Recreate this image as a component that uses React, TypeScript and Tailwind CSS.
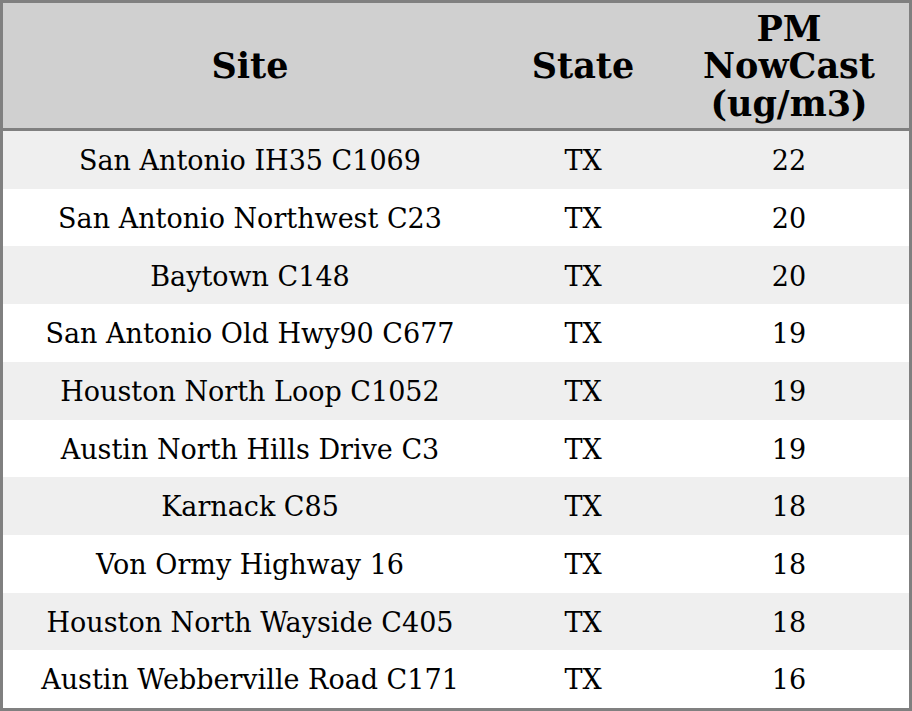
import React from "react";

const rows: [string, string, string][] = [
  ["San Antonio IH35 C1069", "TX", "22"],
  ["San Antonio Northwest C23", "TX", "20"],
  ["Baytown C148", "TX", "20"],
  ["San Antonio Old Hwy90 C677", "TX", "19"],
  ["Houston North Loop C1052", "TX", "19"],
  ["Austin North Hills Drive C3", "TX", "19"],
  ["Karnack C85", "TX", "18"],
  ["Von Ormy Highway 16", "TX", "18"],
  ["Houston North Wayside C405", "TX", "18"],
  ["Austin Webberville Road C171", "TX", "16"],
];

export default function App() {
  return (
    <div
      className="w-[912px] h-[711px] border-[3px] border-[#808080] flex flex-col bg-white text-black"
      style={{ fontFamily: '"DejaVu Serif", serif' }}
    >
      <div className="h-[128px] shrink-0 flex bg-[#d0d0d0] border-b-[3px] border-[#808080] font-bold text-[35px] leading-[37.5px] pt-[1px]">
        <div className="w-[494px] flex items-center justify-center text-center">Site</div>
        <div className="w-[172px] flex items-center justify-center text-center">State</div>
        <div className="flex-1 flex items-center justify-center text-center">
          PM
          <br />
          NowCast
          <br />
          (ug/m3)
        </div>
      </div>
      {rows.map((r, i) => (
        <div
          key={i}
          className={`flex-1 flex items-center text-[27px] pt-[3px] ${i % 2 === 0 ? "bg-[#efefef]" : "bg-white"}`}
        >
          <div className="w-[494px] text-center">{r[0]}</div>
          <div className="w-[172px] text-center">{r[1]}</div>
          <div className="flex-1 text-center">{r[2]}</div>
        </div>
      ))}
    </div>
  );
}
